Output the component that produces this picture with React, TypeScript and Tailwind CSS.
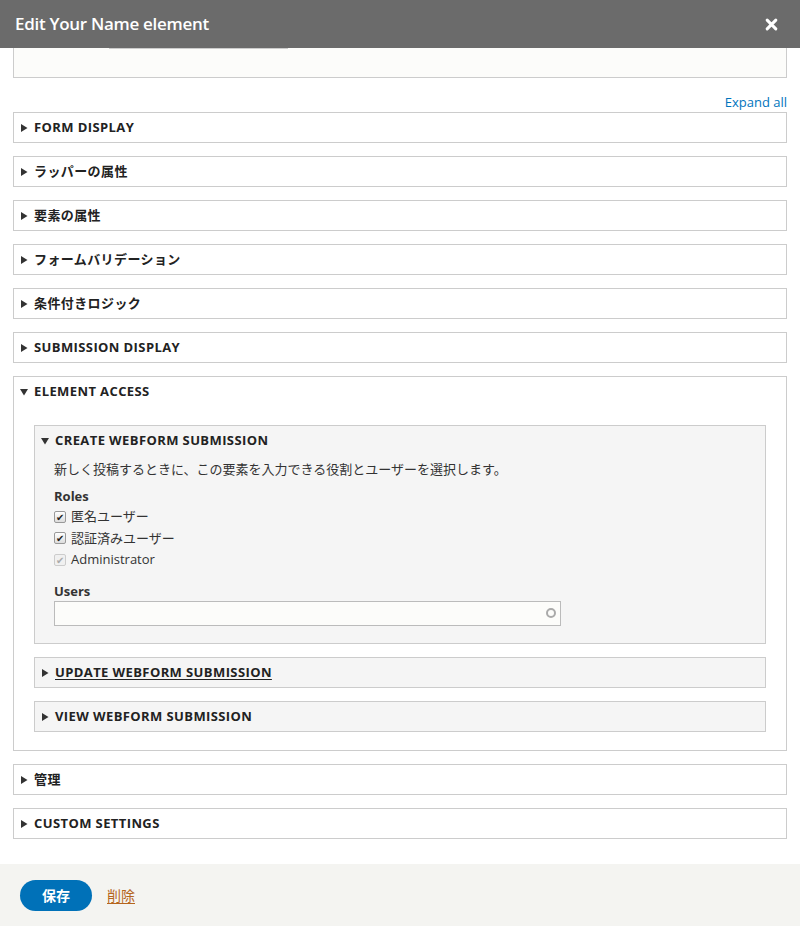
const FONT = { fontFamily: '"Open Sans", "Noto Sans CJK JP", sans-serif' };

function Triangle({ open = false }: { open?: boolean }) {
  return (
    <svg className="w-[8px] h-[8px] shrink-0 text-[#333]" viewBox="0 0 8 8" fill="currentColor">
      {open ? <path d="M0 1h8L4 7.5z" /> : <path d="M1 0v8l6.5-4z" />}
    </svg>
  );
}

function Summary({ label, open = false, underline = false }: { label: string; open?: boolean; underline?: boolean }) {
  return (
    <div className="flex items-center gap-[6px] h-[29px] pl-[6px] pt-[1px]">
      <Triangle open={open} />
      <span className={`text-[13px] font-bold text-[#222] tracking-[0.4px] ${underline ? 'underline underline-offset-2' : ''}`}>
        {label}
      </span>
    </div>
  );
}

function Collapsed({ label }: { label: string }) {
  return (
    <div className="border border-[#ccc] bg-white">
      <Summary label={label} />
    </div>
  );
}

function Check({ disabled = false }: { disabled?: boolean }) {
  return (
    <span
      className={`inline-flex items-center justify-center w-[12px] h-[12px] rounded-[2px] border text-[10px] leading-none ${
        disabled ? 'border-[#ccc] bg-[#f0f0f0] text-[#aaa]' : 'border-[#999] bg-gradient-to-b from-white to-[#ddd] text-[#222]'
      }`}
    >
      ✔
    </span>
  );
}

export default function App() {
  const roles = [
    { label: '匿名ユーザー', disabled: false },
    { label: '認証済みユーザー', disabled: false },
    { label: 'Administrator', disabled: true },
  ];

  return (
    <div className="w-[800px] h-[926px] overflow-hidden flex flex-col bg-white" style={FONT}>
      {/* Title bar */}
      <div className="h-12 shrink-0 bg-[#6b6b6b] flex items-center justify-between px-[15px]">
        <h1 className="text-white text-[17px] font-semibold tracking-[-0.3px]">Edit Your Name element</h1>
        <svg className="w-[13px] h-[13px] mr-[7px]" viewBox="0 0 12 12" stroke="white" strokeWidth="2.8" strokeLinecap="round">
          <path d="M2 2l8 8M10 2l-8 8" />
        </svg>
      </div>

      {/* Scrolling content */}
      <div className="flex-1 px-[13px]">
        <div className="h-[30px] border-x border-b border-[#ccc] bg-[#fcfcfa]">
          <div className="ml-[95px] w-[179px] h-[1px] bg-[#ccc]" />
        </div>

        <div className="flex justify-end h-[34px] items-end pb-[3px]">
          <a className="text-[13px] text-[#0074bd] leading-none">Expand all</a>
        </div>

        <div className="flex flex-col gap-[13px]">
          <Collapsed label="FORM DISPLAY" />
          <Collapsed label="ラッパーの属性" />
          <Collapsed label="要素の属性" />
          <Collapsed label="フォームバリデーション" />
          <Collapsed label="条件付きロジック" />
          <Collapsed label="SUBMISSION DISPLAY" />

          {/* Element access */}
          <div className="border border-[#ccc] bg-white">
            <Summary label="ELEMENT ACCESS" open />
            <div className="px-5 pt-[19px] pb-[18px] flex flex-col gap-[13px]">
              <div className="border border-[#ccc] bg-[#f5f5f5]">
                <Summary label="CREATE WEBFORM SUBMISSION" open />
                <div className="px-[19px] pb-[17px] text-[13px] text-[#333]">
                  <p className="mt-[5px] leading-[18px]">新しく投稿するときに、この要素を入力できる役割とユーザーを選択します。</p>
                  <p className="mt-[9px] font-bold leading-[19px]">Roles</p>
                  <div className="flex flex-col">
                    {roles.map((r) => (
                      <label key={r.label} className="flex items-center gap-[5px] h-[21.5px]">
                        <Check disabled={r.disabled} />
                        <span>{r.label}</span>
                      </label>
                    ))}
                  </div>
                  <p className="mt-[11px] font-bold leading-[18px]">Users</p>
                  <div className="mt-[1px] w-[507px] h-[25px] border border-[#bbb] bg-[#fcfcfa] flex items-center justify-end pr-[4px]">
                    <span className="w-[10px] h-[10px] rounded-full border-2 border-[#aaa]" />
                  </div>
                </div>
              </div>
              <div className="border border-[#ccc] bg-[#f5f5f5]">
                <Summary label="UPDATE WEBFORM SUBMISSION" underline />
              </div>
              <div className="border border-[#ccc] bg-[#f5f5f5]">
                <Summary label="VIEW WEBFORM SUBMISSION" />
              </div>
            </div>
          </div>

          <Collapsed label="管理" />
          <Collapsed label="CUSTOM SETTINGS" />
        </div>
      </div>

      {/* Footer */}
      <div className="h-[62px] shrink-0 bg-[#f4f4f1] flex items-center gap-[15px] px-5">
        <button className="w-[72px] h-[31px] rounded-full bg-[#0071b8] text-white text-[14px] font-semibold">保存</button>
        <a className="text-[14px] text-[#b5651d] underline underline-offset-2">削除</a>
      </div>
    </div>
  );
}
